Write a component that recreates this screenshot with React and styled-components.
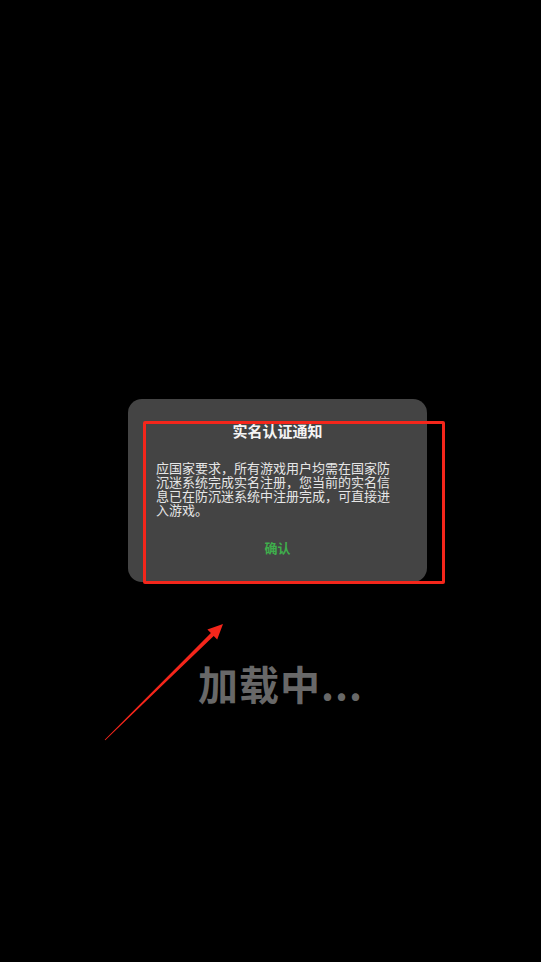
import React from 'react'
import styled, { createGlobalStyle } from 'styled-components';

const GlobalStyle = createGlobalStyle`
    html, body {
        margin: 0;
        padding: 0;
        background-color: #000;
    }
    body {
        font-family: 'Noto Sans CJK SC', 'Noto Sans', sans-serif;
    }
`

const Screen = styled.div`
    position: relative;
    width: 541px;
    height: 962px;
    background-color: #000;
    display: flex;
    flex-direction: column;
    align-items: flex-start;
    padding: 399px 0 0 128px;
    box-sizing: border-box;
    overflow: hidden;
`
const Dialog = styled.div`
    width: 299px;
    height: 183px;
    box-sizing: border-box;
    background-color: #444444;
    border-radius: 14px;
    padding: 22px 28px 0 28px;
    display: flex;
    flex-direction: column;
`
const Title = styled.div`
    font-size: 15px;
    line-height: 20px;
    font-weight: 700;
    color: #f4f4f4;
    text-align: center;
`
const Message = styled.div`
    margin-top: 20px;
    font-size: 13px;
    line-height: 14px;
    color: #e6e6e6;
`
const ConfirmButton = styled.button`
    margin-top: 22px;
    align-self: center;
    background: none;
    border: none;
    padding: 0;
    font-family: inherit;
    font-size: 13px;
    line-height: 18px;
    font-weight: 700;
    color: #3fae4c;
`
const LoadingText = styled.div`
    margin: 77px 0 0 70px;
    font-size: 40px;
    line-height: 48px;
    font-weight: 700;
    color: #686868;
    letter-spacing: 1px;
`
/* annotation overlay drawn on top of the screenshot */
const Highlight = styled.div`
    position: absolute;
    left: 143px;
    top: 421px;
    width: 302px;
    height: 163px;
    box-sizing: border-box;
    border: 3.5px solid #f4261b;
    border-radius: 2px;
`
const ArrowSvg = styled.svg`
    position: absolute;
    left: 0;
    top: 0;
    pointer-events: none;
`

function Arrow(){
    return(
        <ArrowSvg width="541" height="962" viewBox="0 0 541 962">
            <polygon
                points="104.7,739.7 210.9,633.1 207.4,629.5 223,624 217.2,639.5 213.7,635.9 105.3,740.3"
                fill="#f4261b"
            />
        </ArrowSvg>
    )
}

function App(){
    return(
        <Screen>
            <GlobalStyle />
            <Dialog>
                <Title>实名认证通知</Title>
                <Message>应国家要求，所有游戏用户均需在国家防沉迷系统完成实名注册，您当前的实名信息已在防沉迷系统中注册完成，可直接进入游戏。</Message>
                <ConfirmButton>确认</ConfirmButton>
            </Dialog>
            <LoadingText>加载中...</LoadingText>
            <Highlight />
            <Arrow />
        </Screen>
    )
}

export default App;
